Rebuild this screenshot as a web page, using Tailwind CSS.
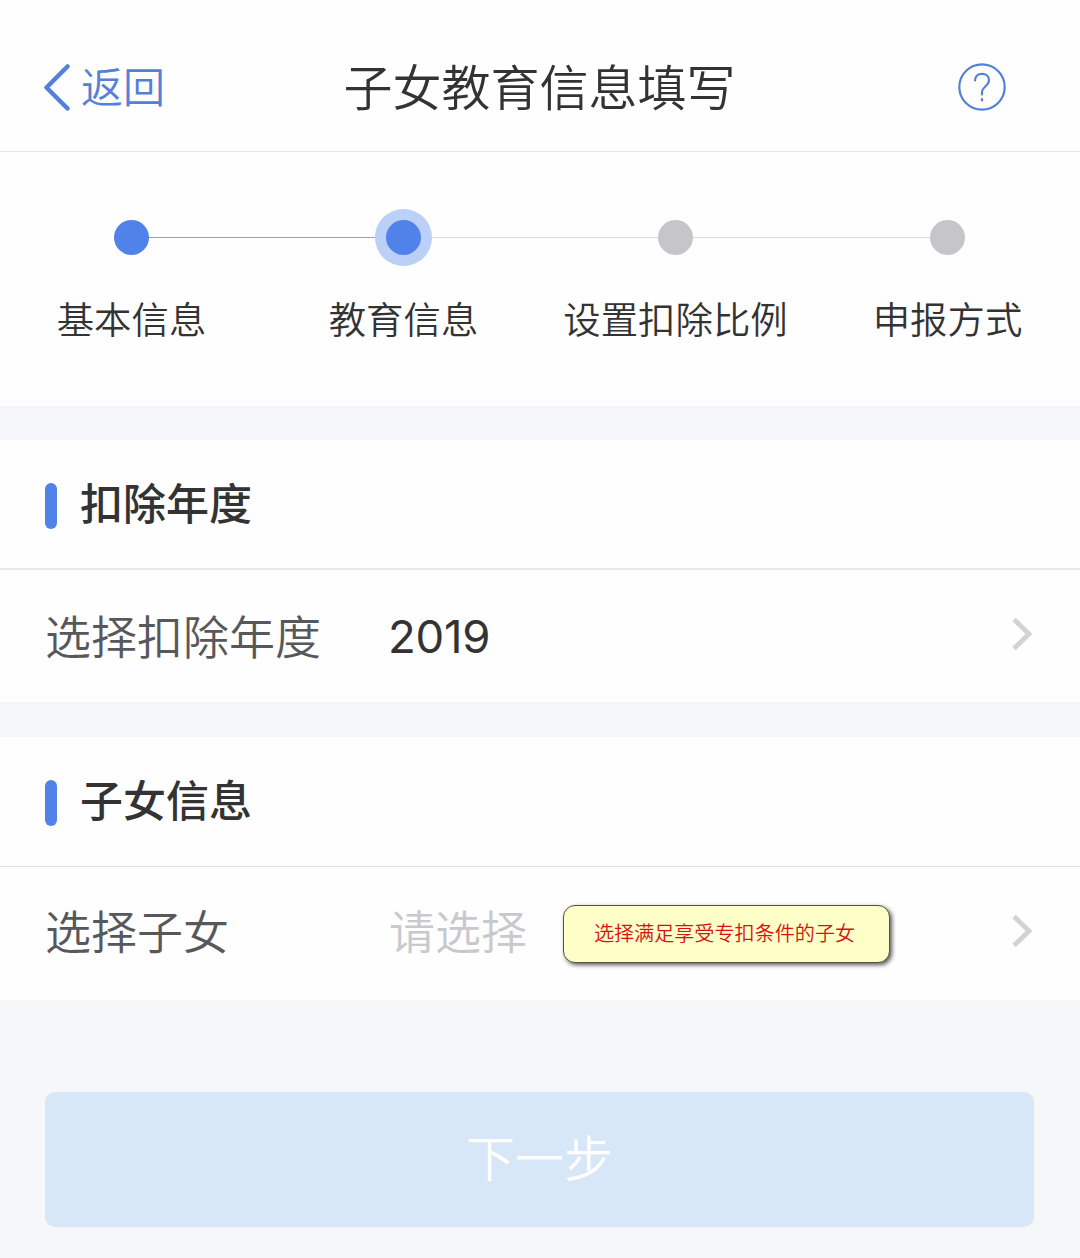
<!DOCTYPE html>
<html lang="zh-CN">
<head>
  <meta charset="UTF-8" />
  <title>子女教育信息填写</title>
  <script src="https://cdn.jsdelivr.net/npm/@tailwindcss/browser@4"></script>
</head>
<body class="bg-[#f5f6fa] text-[#333333] h-[1258px] w-[1080px] overflow-hidden font-['Noto_Sans_CJK_SC',sans-serif]">
  <!-- Header -->
  <header class="h-[152px] bg-[#fefefe] border-b border-[#e6e6e8] pt-[22px] pl-[43px] pr-[74px] grid grid-cols-[1fr_auto_1fr] items-center">
    <a class="flex items-center gap-[10px] text-[42px] leading-none text-[#5580d8]">
      <svg class="w-[28px] h-[48px]" viewBox="0 0 28 48" fill="none" stroke="currentColor" stroke-width="4.500" stroke-linecap="round" stroke-linejoin="round">
        <path d="M24.500 3.500L3.500 24.500L24.500 45.500" />
      </svg>
      <span class="pb-[3px] font-[350]">返回</span>
    </a>
    <h1 class="ml-[30px] pb-[5px] text-[49px] leading-none font-[350]">子女教育信息填写</h1>
    <svg class="w-[48px] h-[48px] justify-self-end text-[#5580d8]" viewBox="0 0 48 48" fill="none" stroke="currentColor" stroke-width="2.200" stroke-linecap="round">
      <circle cx="24" cy="24" r="22.700" />
      <path d="M17 17.500C17 13.500 20 10.800 24 10.800C28.200 10.800 31 13.600 31 17.300C31 20.200 29.300 21.800 27.300 23.500C25 25.500 24 26.800 24 29V31.500" />
      <path d="M24 36.200V37.500" />
    </svg>
  </header>

  <!-- Steps -->
  <section class="h-[254px] bg-[#fefefe] pt-[68px]">
    <div class="flex items-center pl-[114px] pr-[115px]">
      <span class="size-[35px] rounded-full bg-[#5182ea]"></span>
      <span class="flex-1 h-px bg-[#94a3bd]"></span>
      <span class="size-[35px] rounded-full bg-[#5182ea] ring-[11px] ring-[#bad0f7] z-10"></span>
      <span class="flex-1 h-px bg-[#d9d9db]"></span>
      <span class="size-[35px] rounded-full bg-[#c6c6ca]"></span>
      <span class="flex-1 h-px bg-[#d9d9db]"></span>
      <span class="size-[35px] rounded-full bg-[#c6c6ca]"></span>
    </div>
    <div class="grid grid-cols-4 w-[1088px] -ml-[4.500px] mt-[45px] text-center text-[37.400px] leading-[37px] font-[350]">
      <span>基本信息</span>
      <span>教育信息</span>
      <span>设置扣除比例</span>
      <span>申报方式</span>
    </div>
  </section>

  <!-- Deduction year -->
  <section class="mt-[34px] bg-[#fefefe]">
    <div class="h-[130px] pl-[45px] flex items-center gap-[23px] border-b-2 border-[#e8e8ea]">
      <span class="w-3 h-[46px] mt-1 rounded-full bg-[#5182ea]"></span>
      <h2 class="pb-1.5 text-[43px] leading-none font-medium">扣除年度</h2>
    </div>
    <div class="h-[132px] pl-[45px] pr-[47px] pb-[5px] flex items-center text-[46px] leading-none">
      <span class="w-[343px] text-[#58585c] font-[350]">选择扣除年度</span>
      <span class="mt-[7px] font-['Inter',sans-serif] text-[45.500px] tracking-[-0.200px]">2019</span>
      <svg class="ml-auto w-[21px] h-[34px] text-[#d2d2d6]" viewBox="0 0 21 34" fill="none" stroke="currentColor" stroke-width="4.800">
        <path d="M2 2.500L17 17L2 31.500" />
      </svg>
    </div>
  </section>

  <!-- Child info -->
  <section class="mt-[35px] bg-[#fefefe]">
    <div class="h-[130px] pl-[45px] flex items-center gap-[23px] border-b border-[#dfdfe1]">
      <span class="w-3 h-[46px] mt-[3px] rounded-full bg-[#5182ea]"></span>
      <h2 class="pb-1.5 text-[43px] leading-none font-medium">子女信息</h2>
    </div>
    <div class="h-[133px] pl-[45px] pr-[47px] pb-1.5 flex items-center text-[46px] leading-none">
      <span class="w-[344px] pb-1 text-[#58585c] font-[350]">选择子女</span>
      <span class="w-[174px] pb-1 text-[#c9c9cd] font-[350]">请选择</span>
      <span class="w-[327px] h-[58px] mt-1.5 pr-1 rounded-xl border border-[#55553c] bg-[#feffc8] shadow-[2px_2px_4px_rgba(0,0,0,0.65)] flex items-center justify-center text-[20.100px] text-[#d8120c] font-[350]">选择满足享受专扣条件的子女</span>
      <svg class="ml-auto w-[21px] h-[34px] text-[#d2d2d6]" viewBox="0 0 21 34" fill="none" stroke="currentColor" stroke-width="4.800">
        <path d="M2 2.500L17 17L2 31.500" />
      </svg>
    </div>
  </section>

  <div class="h-[258px] pt-[92px] px-[45px] bg-[#f5f7f9]">
    <button class="block w-[989px] h-[135px] pb-2 rounded-[10px] bg-[#d7e7f7] text-white text-[49px] leading-none font-[350]">下一步</button>
  </div>
</body>
</html>
